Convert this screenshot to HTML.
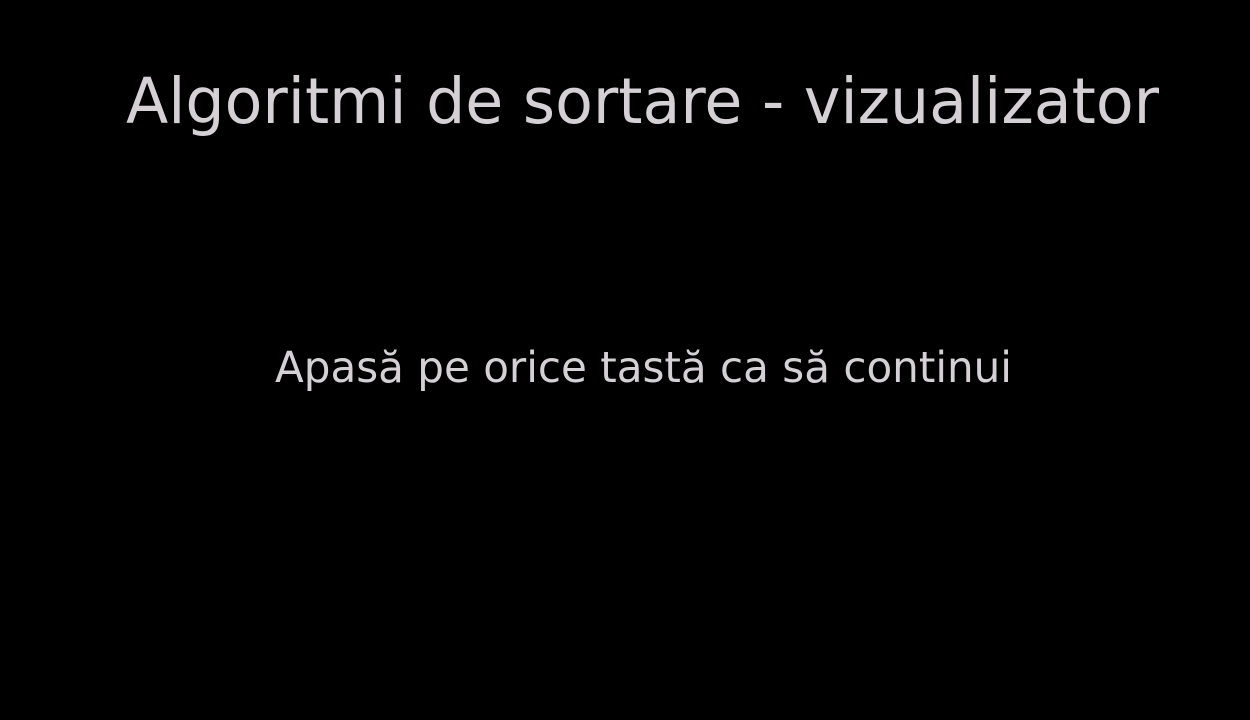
<!DOCTYPE html>
<html><head><meta charset="utf-8"><style>
html,body{margin:0;padding:0;background:#000;width:1250px;height:720px;overflow:hidden}
svg{display:block}
text{font-family:"DejaVu Sans","Liberation Sans",sans-serif;fill:#d4d0d4}
</style></head><body>
<svg width="1250" height="720" viewBox="0 0 1250 720">
<text x="642.5" y="123" font-size="63" text-anchor="middle" textLength="1033" lengthAdjust="spacingAndGlyphs">Algoritmi de sortare - vizualizator</text>
<text x="643.5" y="382" font-size="43" text-anchor="middle" textLength="737" lengthAdjust="spacingAndGlyphs">Apasă pe orice tastă ca să continui</text>
</svg>
</body></html>
